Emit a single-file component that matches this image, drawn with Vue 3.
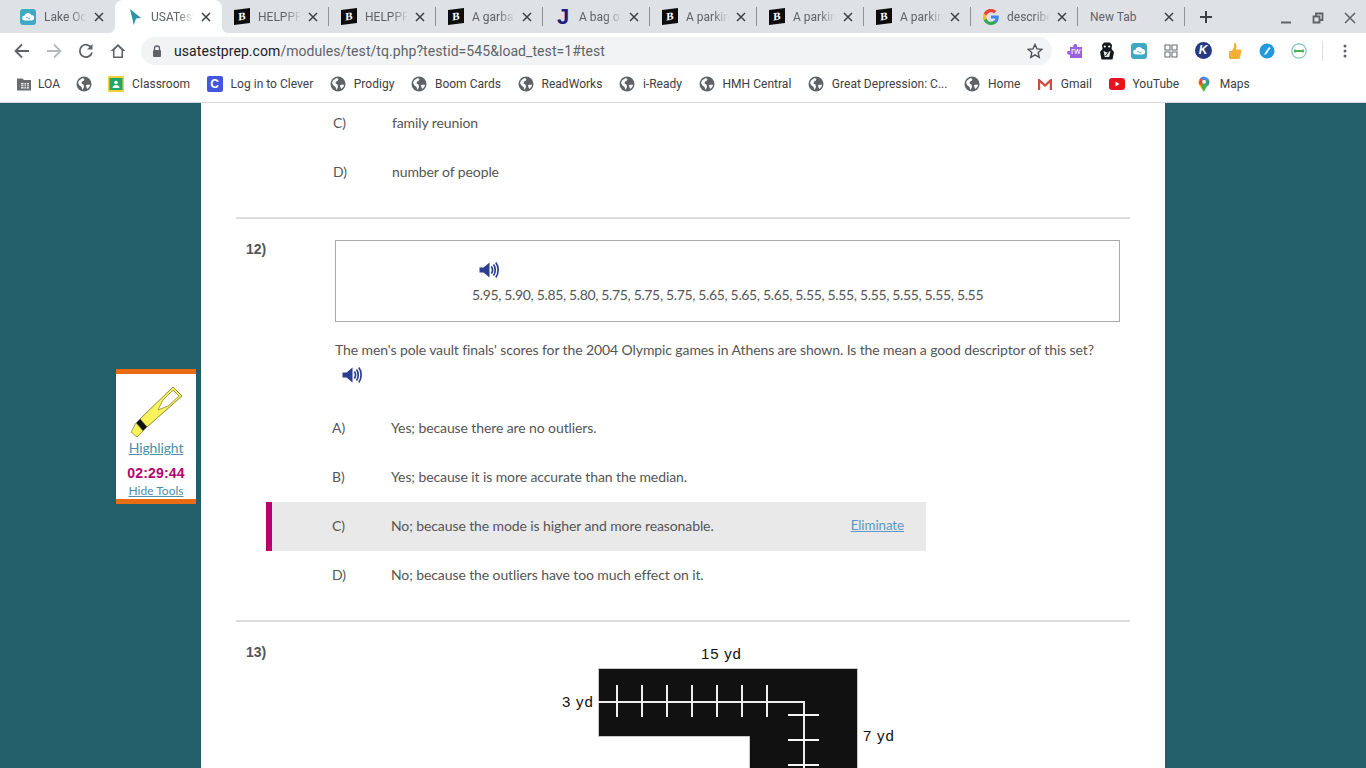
<script setup>
const tabs = [
  { title: 'Lake Oc', icon: 'cloud' },
  { title: 'USATest', icon: 'cursor', active: true },
  { title: 'HELPPF', icon: 'brainly' },
  { title: 'HELPPF', icon: 'brainly' },
  { title: 'A garba', icon: 'brainly' },
  { title: 'A bag o', icon: 'j' },
  { title: 'A parkin', icon: 'brainly' },
  { title: 'A parkin', icon: 'brainly' },
  { title: 'A parkin', icon: 'brainly' },
  { title: 'describe', icon: 'google' },
  { title: 'New Tab', icon: '' }
]
const bookmarks = [
  { label: 'LOA', icon: 'folder' },
  { label: '', icon: 'globe' },
  { label: 'Classroom', icon: 'classroom' },
  { label: 'Log in to Clever', icon: 'clever' },
  { label: 'Prodigy', icon: 'globe' },
  { label: 'Boom Cards', icon: 'globe' },
  { label: 'ReadWorks', icon: 'globe' },
  { label: 'i-Ready', icon: 'globe' },
  { label: 'HMH Central', icon: 'globe' },
  { label: 'Great Depression: C...', icon: 'globe' },
  { label: 'Home', icon: 'globe' },
  { label: 'Gmail', icon: 'gmail' },
  { label: 'YouTube', icon: 'youtube' },
  { label: 'Maps', icon: 'maps' }
]
const extensions = ['rw', 'bear', 'cloud', 'grid', 'k', 'thumb', 'safari', 'ring']
const prevOptions = [
  { letter: 'C)', text: 'family reunion' },
  { letter: 'D)', text: 'number of people' }
]
const options = [
  { letter: 'A)', text: 'Yes; because there are no outliers.' },
  { letter: 'B)', text: 'Yes; because it is more accurate than the median.' },
  { letter: 'C)', text: 'No; because the mode is higher and more reasonable.', hover: true },
  { letter: 'D)', text: 'No; because the outliers have too much effect on it.' }
]
const ticksV = [59, 84, 109, 134, 159, 184, 209]
const ticksH = [72, 97, 122]
</script>

<template>
  <div class="page">
    <svg class="defs" aria-hidden="true">
      <symbol id="i-cloud" viewBox="0 0 16 16">
        <rect width="16" height="16" rx="3" fill="#3fa9c4" />
        <path d="M4.500 11.500a2.400 2.400 0 0 1 0-4.800 3.600 3.600 0 0 1 6.800-.6 2.700 2.700 0 0 1 .2 5.400z" fill="#fff" />
        <path d="M6 9.200c1-1.600 1.800-.2 2.200.2s1.500 1 2-.6" fill="none" stroke="#3fa9c4" stroke-width="1" />
      </symbol>
      <symbol id="i-cursor" viewBox="0 0 16 16">
        <path d="M3 0l11 9-5 .6L6.800 16z" fill="#2b93a6" />
      </symbol>
      <symbol id="i-google" viewBox="0 0 16 16">
        <path d="M15.700 8.200c0-.6 0-1.100-.1-1.600H8v3h4.400a3.700 3.700 0 0 1-1.600 2.500v2h2.600c1.500-1.400 2.300-3.500 2.300-5.900z" fill="#4285f4" />
        <path d="M8 16c2.200 0 4-.7 5.400-2l-2.600-2c-.7.500-1.700.8-2.800.8-2.100 0-3.900-1.400-4.600-3.400H.8v2.100A8 8 0 0 0 8 16z" fill="#34a853" />
        <path d="M3.400 9.400a4.800 4.800 0 0 1 0-3V4.300H.8a8 8 0 0 0 0 7.200z" fill="#fbbc05" />
        <path d="M8 3.200c1.200 0 2.300.4 3.100 1.200l2.300-2.300A8 8 0 0 0 .8 4.300l2.600 2.100C4.100 4.500 5.900 3.200 8 3.200z" fill="#ea4335" />
      </symbol>
      <symbol id="i-folder" viewBox="0 0 16 16">
        <path d="M1 2.500h5.500L8 4h7v10.500H1z" fill="#6a6d70" />
        <path d="M5 7h8v5.500H5z" fill="#e8e8e8" />
        <path d="M5 8.800h8M5 10.600h8M8 7v5.500M10.500 7v5.500" stroke="#6a6d70" stroke-width=".8" />
      </symbol>
      <symbol id="i-globe" viewBox="0 0 16 16">
        <circle cx="8" cy="8" r="7.500" fill="#5f6368" />
        <path d="M3 4.500l3.500-2.500 2 1-1 2-1.500.500-.5 2 2 1 .5 2.500-1.500 3-1-3-2-1.500-1.500-2.500zM10 9l3.500-.5.500 1.500-2.500 3-1-1.500z" fill="#fff" />
      </symbol>
      <symbol id="i-classroom" viewBox="0 0 16 16">
        <rect width="16" height="16" fill="#f6d13b" />
        <rect x="1.500" y="2" width="13" height="12" fill="#22a565" />
        <circle cx="8" cy="6.500" r="1.800" fill="#fff" />
        <path d="M4.500 12c0-4 7-4 7 0z" fill="#fff" />
      </symbol>
      <symbol id="i-gmail" viewBox="0 0 16 16">
        <path d="M1 14V3h1.500L8 8l5.500-5H15v11h-2.200V6.800L8 11 3.200 6.800V14z" fill="#d1493f" />
      </symbol>
      <symbol id="i-youtube" viewBox="0 0 16 16">
        <rect y="2" width="16" height="12" rx="3" fill="#e8141d" />
        <path d="M6.500 5.600L10.500 8l-4 2.400z" fill="#fff" />
      </symbol>
      <symbol id="i-maps" viewBox="0 0 16 16">
        <path d="M8 16C6.500 13 2.500 10.500 2.500 5.800A5.500 5.500 0 0 1 4.200 1.900L8 6z" fill="#fbbc04" />
        <path d="M4.200 1.900A5.500 5.500 0 0 1 8 .4l3.600 1.600L8 6z" fill="#4285f4" />
        <path d="M4.200 1.900L8 6 5 9.500 2.800 7.500z" fill="#ea4335" />
        <path d="M11.600 2A5.500 5.500 0 0 1 13.500 5.800c0 1.800-.8 3.200-1.600 4.500L8 6z" fill="#4285f4" />
        <path d="M8 16c-.7-1.500-2-3.500-3-6.500L11.600 2.800l1 2c.7 4.200-3.100 7.200-4.600 11.200z" fill="#34a853" opacity=".9" />
        <circle cx="8" cy="5.800" r="1.900" fill="#fff" />
      </symbol>
      <symbol id="i-rw" viewBox="0 0 18 18">
        <path d="M4 5h3.500a2 2 0 1 1 3.500 0h5v11H4v-3.500a2 2 0 1 1 0-3.500z" fill="#9a62de" />
      </symbol>
      <symbol id="i-bear" viewBox="0 0 18 18">
        <path d="M4 3l2-2.500h6L14 3l-.5 4 2.500 3-1.500 7.500h-11L2 10l2.500-3z" fill="#15181a" />
        <circle cx="6.800" cy="4.500" r="1.100" fill="#fff" />
        <circle cx="11.200" cy="4.500" r="1.100" fill="#fff" />
        <path d="M5.500 9l3.500 1.500L12.500 9l-1.300 6H6.800z" fill="#e8e8e8" />
        <path d="M7.500 14l3-4" stroke="#15181a" stroke-width="1" />
      </symbol>
      <symbol id="i-grid" viewBox="0 0 16 16">
        <path d="M2 2h5v5H2zM9 2h5v5H9zM2 9h5v5H2zM9 9h5v5H9z" fill="none" stroke="#6a6d70" stroke-width="1.100" />
      </symbol>
      <symbol id="i-thumb" viewBox="0 0 18 18">
        <path d="M3 9h3l2-4.500V1c2-.5 2.500 1.500 2.500 3L10 7.500h4.500c1 0 1 1 .8 2l-1.300 6.500c-.2.800-.8 1-1.500 1H5c-1.500 0-2-.5-2-2z" fill="#f2b134" />
      </symbol>
      <symbol id="i-speaker" viewBox="0 0 20 18">
        <path d="M.5 6.500h4L10.500 1.500v15l-6-5h-4z" fill="#2b4090" />
        <path d="M12.300 5.500c1.500 2 1.500 5 0 7M14.500 3.500c2.300 3 2.300 8 0 11M16.800 1.500c3.100 4 3.100 11 0 15" fill="none" stroke="#2b4090" stroke-width="1.700" />
      </symbol>
    </svg>

    <header class="chrome">
      <div class="tabstrip">
        <div
          v-for="(tab, i) in tabs"
          :key="i"
          class="tab"
          :class="{ active: tab.active, sep: i > 1 }"
        >
          <span class="favicon">
            <span v-if="tab.icon === 'brainly'" class="brainly">B</span>
            <span v-else-if="tab.icon === 'j'" class="jfav">J</span>
            <svg v-else-if="tab.icon" width="16" height="16"><use :href="'#i-' + tab.icon" /></svg>
          </span>
          <span class="tab-title" :class="{ plain: !tab.icon }">{{ tab.title }}</span>
          <svg class="tab-x" width="10" height="10" viewBox="0 0 10 10">
            <path d="M1 1l8 8M9 1l-8 8" stroke="#3c4043" stroke-width="1.500" />
          </svg>
        </div>
        <svg class="plus" width="14" height="14" viewBox="0 0 14 14">
          <path d="M7 1v12M1 7h12" stroke="#3c4043" stroke-width="2" />
        </svg>
        <div class="winctl">
          <span class="win"><svg width="12" height="12" viewBox="0 0 12 12"><path d="M1 10.500h10" stroke="#5f6368" stroke-width="2" /></svg></span>
          <span class="win"><svg width="12" height="12" viewBox="0 0 12 12"><path d="M1.500 4.500h6v6h-6zM4 4V1.500h6.500V8H8" fill="none" stroke="#5f6368" stroke-width="1.800" /></svg></span>
          <span class="win"><svg width="12" height="12" viewBox="0 0 12 12"><path d="M1 1l10 10M11 1L1 11" stroke="#5f6368" stroke-width="1.500" /></svg></span>
        </div>
      </div>

      <div class="toolbar">
        <span class="navbtn"><svg width="16" height="16" viewBox="0 0 16 16"><path d="M15 8H2M8 1.500L1.500 8 8 14.500" fill="none" stroke="#5f6368" stroke-width="1.800" /></svg></span>
        <span class="navbtn"><svg width="16" height="16" viewBox="0 0 16 16"><path d="M1 8h13M8 1.500L14.500 8 8 14.500" fill="none" stroke="#b6b8bb" stroke-width="1.800" /></svg></span>
        <span class="navbtn"><svg width="16" height="16" viewBox="0 0 16 16"><path d="M13.500 5A6.200 6.200 0 1 0 14 9.500" fill="none" stroke="#5f6368" stroke-width="1.800" /><path d="M14.500 1v5.500H9z" fill="#5f6368" /></svg></span>
        <span class="navbtn"><svg width="16" height="16" viewBox="0 0 16 16"><path d="M8 1L.5 8h2.500v7h10V8h2.500zM4.500 13.500v-6.500L8 3.500l3.500 3.500v6.500z" fill="#5f6368" fill-rule="evenodd" /></svg></span>
        <div class="omnibox">
          <svg class="lock" width="10" height="12" viewBox="0 0 10 12">
            <path d="M2.500 5V3.500a2.500 2.500 0 0 1 5 0V5" fill="none" stroke="#5f6368" stroke-width="1.300" />
            <rect x="1" y="5" width="8" height="7" rx="1" fill="#5f6368" />
          </svg>
          <span class="url"><b>usatestprep.com</b>/modules/test/tq.php?testid=545&amp;load_test=1#test</span>
          <svg class="star" width="16" height="16" viewBox="0 0 16 16">
            <path d="M8 1.500l2 4.400 4.800.5-3.600 3.200 1 4.700L8 11.900 3.800 14.300l1-4.700L1.200 6.400 6 5.900z" fill="none" stroke="#4d5156" stroke-width="1.400" />
          </svg>
        </div>
        <div class="exts">
          <span v-for="e in extensions" :key="e" class="navbtn">
            <span v-if="e === 'rw'" class="ext-rw">
              <svg width="18" height="18"><use href="#i-rw" /></svg>
              <span class="rw-label">rw</span>
            </span>
            <svg v-else-if="e === 'bear'" width="18" height="18"><use href="#i-bear" /></svg>
            <svg v-else-if="e === 'cloud'" width="16" height="16"><use href="#i-cloud" /></svg>
            <svg v-else-if="e === 'grid'" width="16" height="16"><use href="#i-grid" /></svg>
            <span v-else-if="e === 'k'" class="ext-k">K</span>
            <svg v-else-if="e === 'thumb'" width="18" height="18"><use href="#i-thumb" /></svg>
            <svg v-else-if="e === 'safari'" width="16" height="16" viewBox="0 0 16 16">
              <circle cx="8" cy="8" r="7.500" fill="#1f9ae0" />
              <path d="M5 11.500L10 4l1.500 1L7 11.500z" fill="#fff" />
            </svg>
            <svg v-else width="16" height="16" viewBox="0 0 16 16">
              <circle cx="8" cy="8" r="7.200" fill="#fff" stroke="#7cc4be" stroke-width="1.200" />
              <path d="M4 6.500v3M12 6.500v3M4 8h8" stroke="#46b45a" stroke-width="1.800" />
            </svg>
          </span>
        </div>
        <span class="tool-sep"></span>
        <span class="navbtn"><svg width="4" height="14" viewBox="0 0 4 14"><circle cx="2" cy="2" r="1.500" fill="#5f6368" /><circle cx="2" cy="7" r="1.500" fill="#5f6368" /><circle cx="2" cy="12" r="1.500" fill="#5f6368" /></svg></span>
      </div>

      <div class="bookmarks">
        <span v-for="(b, i) in bookmarks" :key="i" class="bm" :class="{ tight: i === 0 }">
          <span v-if="b.icon === 'clever'" class="clever">C</span>
          <svg v-else width="16" height="16"><use :href="'#i-' + b.icon" /></svg>
          <span v-if="b.label" class="bm-label">{{ b.label }}</span>
        </span>
      </div>
    </header>

    <main class="stage">
      <aside class="tools">
        <svg class="marker" width="52" height="52" viewBox="0 0 52 52">
          <path d="M42 1l9 9-35 31-7-8z" fill="#f9f25a" stroke="#8d8a3a" stroke-width="1" />
          <path d="M42 4l6 6-11 10-10 4 5-10z" fill="#fff" stroke="#8d8a3a" stroke-width=".8" />
          <path d="M9 33l7 8-4 4-7-8z" fill="#111" />
          <path d="M5 37l7 8-6 6-6-5z" fill="#f9f25a" stroke="#8d8a3a" stroke-width=".8" />
        </svg>
        <a class="tool-link">Highlight</a>
        <div class="timer">02:29:44</div>
        <a class="tool-hide">Hide Tools</a>
      </aside>

      <div class="sheet">
        <ul class="opts prev">
          <li v-for="o in prevOptions" :key="o.letter" class="opt">
            <span class="letter">{{ o.letter }}</span>
            <span class="opt-text">{{ o.text }}</span>
          </li>
        </ul>
        <hr class="rule" />

        <section class="question">
          <div class="qnum">12)</div>
          <div class="qbody">
            <div class="databox">
              <svg class="speak speak-box" width="20" height="18"><use href="#i-speaker" /></svg>
              <div class="dataline">5.95, 5.90, 5.85, 5.80, 5.75, 5.75, 5.75, 5.65, 5.65, 5.65, 5.55, 5.55, 5.55, 5.55, 5.55, 5.55</div>
            </div>
            <p class="stem">The men's pole vault finals' scores for the 2004 Olympic games in Athens are shown. Is the mean a good descriptor of this set?</p>
            <svg class="speak speak-stem" width="20" height="18"><use href="#i-speaker" /></svg>
          </div>
          <ul class="opts">
            <li v-for="o in options" :key="o.letter" class="opt" :class="{ hover: o.hover }">
              <span class="letter">{{ o.letter }}</span>
              <span class="opt-text">{{ o.text }}</span>
              <a v-if="o.hover" class="elim">Eliminate</a>
            </li>
          </ul>
        </section>
        <hr class="rule" />

        <section class="question">
          <div class="qnum">13)</div>
          <div class="qbody">
            <svg class="diagram" width="340" height="125" viewBox="0 0 340 125">
              <path d="M40.500 25.500h259v110h-108v-42h-151z" fill="#111" stroke="#c8c8c8" stroke-width="1" />
              <path d="M40 59h206v70" fill="none" stroke="#eee" stroke-width="2" />
              <path v-for="x in ticksV" :key="x" :d="`M${x} 42v32`" stroke="#eee" stroke-width="2" />
              <path v-for="y in ticksH" :key="y" :d="`M230 ${y}h31`" stroke="#f6f6f6" stroke-width="2" />
              <text x="143" y="16" class="dim">15 yd</text>
              <text x="4" y="64" class="dim">3 yd</text>
              <text x="305" y="98" class="dim">7 yd</text>
            </svg>
          </div>
        </section>
      </div>
    </main>
  </div>
</template>

<style scoped>
.page {
  width: 1366px;
  height: 768px;
  overflow: hidden;
  display: flex;
  flex-direction: column;
  position: relative;
  font-family: Roboto, "Liberation Sans", sans-serif;
}
.defs {
  position: absolute;
  width: 0;
  height: 0;
}

/* browser chrome */
.chrome {
  flex: none;
  height: 103px;
  background: #fff;
  border-bottom: 1px solid #d5d7da;
  box-sizing: border-box;
}
.tabstrip {
  height: 33px;
  background: #dee1e6;
  display: flex;
  align-items: stretch;
  padding-left: 8px;
}
.tab {
  position: relative;
  flex: none;
  width: 107px;
  box-sizing: border-box;
  padding-left: 12px;
  display: flex;
  align-items: center;
  font-size: 12px;
  color: #5f6368;
}
.tab.sep::after {
  content: "";
  position: absolute;
  right: 0;
  top: 7px;
  height: 19px;
  width: 1px;
  background: #8f9296;
}
.tab.active {
  background: #fff;
  border-radius: 8px 8px 0 0;
}
.tab.active::before {
  content: "";
  position: absolute;
  left: -7px;
  right: -7px;
  bottom: 0;
  height: 7px;
  background:
    radial-gradient(circle at 0 0, #dee1e6 7px, #fff 7.5px) left bottom / 7px 7px no-repeat,
    radial-gradient(circle at 100% 0, #dee1e6 7px, #fff 7.5px) right bottom / 7px 7px no-repeat;
}
.favicon {
  flex: none;
  width: 16px;
  height: 16px;
  margin-right: 8px;
  display: flex;
  align-items: center;
  justify-content: center;
}
.brainly {
  width: 16px;
  height: 15px;
  background: #0c0c0c;
  color: #fff;
  font: bold 11px/15px "Liberation Serif", serif;
  text-align: center;
  transform: skewY(-8deg);
}
.jfav {
  color: #1b1f7a;
  font: bold 22px/16px "Liberation Sans", sans-serif;
}
.tab-title {
  width: 43px;
  white-space: nowrap;
  overflow: hidden;
  -webkit-mask-image: linear-gradient(90deg, #000 62%, transparent 100%);
  mask-image: linear-gradient(90deg, #000 62%, transparent 100%);
}
.tab-title.plain {
  margin-left: -24px;
  width: 67px;
  -webkit-mask-image: none;
  mask-image: none;
}
.tab-x {
  margin-left: 7px;
  flex: none;
}
.plus {
  align-self: center;
  margin-left: 14px;
  flex: none;
}
.winctl {
  margin-left: auto;
  display: flex;
}
.win {
  width: 32px;
  display: flex;
  align-items: center;
  justify-content: center;
  padding-top: 2px;
}
.toolbar {
  height: 35px;
  display: flex;
  align-items: center;
  padding-left: 6px;
}
.navbtn {
  flex: none;
  width: 32px;
  height: 32px;
  display: flex;
  align-items: center;
  justify-content: center;
}
.omnibox {
  flex: none;
  width: 911px;
  height: 28px;
  margin: 0 7px;
  border-radius: 14px;
  background: #f1f3f4;
  display: flex;
  align-items: center;
  box-sizing: border-box;
  padding-left: 11px;
}
.lock {
  flex: none;
  margin-right: 12px;
}
.url {
  font-size: 14px;
  letter-spacing: 0.065px;
  color: #5f6368;
  white-space: nowrap;
}
.url b {
  font-weight: 400;
  color: #202124;
}
.star {
  margin-left: auto;
  margin-right: 9px;
}
.exts {
  display: flex;
}
.ext-rw {
  position: relative;
  width: 18px;
  height: 18px;
  display: block;
}
.rw-label {
  position: absolute;
  left: 5px;
  top: 3px;
  font-size: 9px;
  line-height: 12px;
  color: #fff;
}
.ext-k {
  width: 17px;
  height: 17px;
  border-radius: 50%;
  background: #24397f;
  color: #fff;
  font: italic bold 12px/17px "Liberation Sans", sans-serif;
  text-align: center;
}
.tool-sep {
  flex: none;
  width: 1px;
  height: 20px;
  margin: 0 6px 0 7px;
  background: #dcdee0;
}
.bookmarks {
  height: 34px;
  box-sizing: border-box;
  padding: 0 0 2px 16px;
  display: flex;
  align-items: center;
  font-size: 12px;
  color: #3c4043;
  gap: 16.5px;
}
.bm {
  display: flex;
  align-items: center;
  gap: 8px;
  white-space: nowrap;
}
.bm.tight {
  gap: 6px;
  margin-right: -1px;
}
.bm svg {
  flex: none;
}
.bm-label {
  letter-spacing: 0.02px;
}
.clever {
  width: 16px;
  height: 16px;
  border-radius: 2px;
  background: #4356e0;
  color: #fff;
  font: bold 12px/16px "Liberation Sans", sans-serif;
  text-align: center;
}

/* page */
.stage {
  flex: 1;
  min-height: 0;
  overflow: hidden;
  position: relative;
  background: #235f6b;
}
.tools {
  position: absolute;
  left: 116px;
  top: 266px;
  width: 80px;
  height: 135px;
  box-sizing: border-box;
  background: #fff;
  border-top: 5px solid #ea6c12;
  border-bottom: 5px solid #ea6c12;
  display: flex;
  flex-direction: column;
  align-items: center;
  font-family: Lato, sans-serif;
  color: #4c8fa8;
}
.marker {
  margin-top: 12px;
  margin-left: 2px;
  flex: none;
}
.tool-link {
  font-size: 14px;
  line-height: 18px;
  margin-top: 1px;
  letter-spacing: -0.12px;
  text-decoration: underline;
}
.timer {
  margin-top: 7px;
  font: bold 14px/18px "Liberation Sans", sans-serif;
  letter-spacing: 0.2px;
  color: #b0076e;
}
.tool-hide {
  font-size: 12px;
  line-height: 18px;
  text-decoration: underline;
}
.sheet {
  width: 964px;
  margin-left: 201px;
  margin-top: -4px;
  height: 800px;
  box-sizing: border-box;
  padding: 0 35px;
  background: #fff;
  font-family: Lato, "Noto Sans", sans-serif;
  font-size: 14px;
  letter-spacing: -0.1px;
  color: #555;
}
.rule {
  height: 2px;
  margin: 20px 0 0;
  border: 0;
  background: #dcdcdc;
}
.opts {
  list-style: none;
  margin: 0;
  padding: 0;
}
.opts.prev {
  margin-left: 31px;
}
.opt {
  height: 49px;
  width: 660px;
  box-sizing: border-box;
  border-left: 6px solid transparent;
  padding: 0 22px 2px 60px;
  display: flex;
  align-items: center;
}
.opt.hover {
  background: #e9e9e9;
  border-left-color: #b8006d;
}
.letter {
  width: 59px;
  flex: none;
}
.elim {
  margin-left: auto;
  margin-bottom: 2px;
  color: #5b97c7;
  font-size: 13.4px;
  text-decoration: underline;
}
.question {
  display: grid;
  grid-template-columns: 99px 1fr;
  margin-top: 21px;
}
.question .opts {
  grid-column: 1 / -1;
  margin: 17px 0 0 30px;
}
.qnum {
  padding-left: 10px;
  font: bold 14px/18px "Liberation Sans", sans-serif;
  letter-spacing: 0;
  color: #555;
}
.qbody {
  padding-right: 10px;
  min-width: 0;
}
.databox {
  height: 82px;
  box-sizing: border-box;
  border: 1px solid #aaa;
  padding: 20px 0 0 136px;
}
.speak {
  display: block;
}
.speak-box {
  margin-left: 7px;
}
.dataline {
  margin-top: 6px;
  line-height: 20px;
  letter-spacing: -0.35px;
  white-space: nowrap;
}
.stem {
  margin: 15px 0 0;
  line-height: 25px;
  white-space: nowrap;
}
.speak-stem {
  margin: 4px 0 3px 7px;
}
.diagram {
  display: block;
  margin-left: 223px;
  overflow: visible;
}
.dim {
  font: 15px "Liberation Sans", sans-serif;
  letter-spacing: 0.8px;
  fill: #111;
}
</style>

<style>
html,
body {
  overflow: hidden;
}
</style>
